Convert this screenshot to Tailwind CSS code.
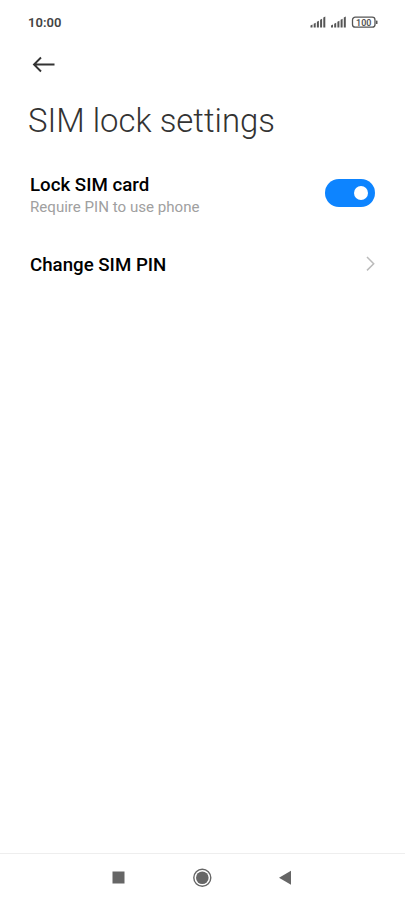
<!DOCTYPE html>
<html lang="en">
<head>
    <meta charset="UTF-8">
    <meta name="viewport" content="width=device-width, initial-scale=1.0">
    <title>SIM lock settings</title>
    <script src="https://cdn.jsdelivr.net/npm/@tailwindcss/browser@4"></script>
</head>
<body class="bg-white font-['Roboto',sans-serif]">
<div class="flex flex-col w-[405px] h-[902px] overflow-hidden">
    <!-- Status bar -->
    <div class="flex items-center justify-between h-11 pl-7 pr-[27px]">
        <span class="pt-px text-[13px] font-semibold tracking-[0.05px] text-[#444]">10:00</span>
        <svg class="w-[68px] h-3" viewBox="0 0 68 12" fill="#555">
            <path d="M0.500 9.500l2-1v3h-2zM3.700 7.800l2-1v4.700h-2zM6.900 5.800l2-1v6.700h-2zM10.100 3.700l2-1v8.800h-2zM13.300 1.500l2-1v11h-2z"/>
            <path d="M21 9.500l2-1v3h-2zM24.200 7.800l2-1v4.700h-2zM27.400 5.800l2-1v6.700h-2zM30.600 3.700l2-1v8.800h-2zM33.800 1.500l2-1v11h-2z"/>
            <rect x="42.500" y="1.200" width="22.500" height="10" rx="2.800" fill="none" stroke="#555" stroke-width="1.300"/>
            <rect x="66" y="4.500" width="1.500" height="3.500" rx="0.500"/>
            <text x="53.800" y="9.600" text-anchor="middle" font-size="9" font-weight="600">100</text>
        </svg>
    </div>

    <!-- Header -->
    <header class="pl-7">
        <button class="flex items-center h-[42px] pl-1">
            <svg class="w-6 h-5" viewBox="0 0 24 20" fill="none" stroke="#333" stroke-width="1.900">
                <path d="M22.500 9.500H2M9 2.500L2 9.500L9 16.500"/>
            </svg>
        </button>
        <h1 class="mt-[13px] text-[32.9px] leading-[44px] font-light text-[#333]">SIM lock settings</h1>
    </header>

    <!-- Settings -->
    <main class="flex-1 px-[30px] pt-[30px]">
        <div class="flex items-start justify-between">
            <div>
                <h2 class="text-[18.7px] leading-6 font-medium text-black">Lock SIM card</h2>
                <p class="text-[15.1px] leading-5 text-[#a0a0a0]">Require PIN to use phone</p>
            </div>
            <div class="flex items-center justify-end w-[50px] h-7 mt-1.5 pr-[7px] rounded-full bg-[#0d84ff]">
                <div class="size-[14px] rounded-full bg-white"></div>
            </div>
        </div>
        <div class="flex items-start justify-between mt-9">
            <h2 class="text-[18.7px] leading-6 font-medium text-black">Change SIM PIN</h2>
            <svg class="w-[10px] h-4 mt-[3px]" viewBox="0 0 10 16" fill="none" stroke="#bbb" stroke-width="1.500">
                <path d="M2 1L8.700 7.700L2 14.400"/>
            </svg>
        </div>
    </main>

    <!-- Navigation bar -->
    <nav class="h-[49px] pl-28 border-t border-[#eee]">
        <svg class="w-[180px] h-12" viewBox="0 0 180 48" fill="#666">
            <rect x="0.500" y="17.500" width="12" height="12"/>
            <circle cx="90.300" cy="23.700" r="6.300"/>
            <circle cx="90.300" cy="23.700" r="8.500" fill="none" stroke="#666" stroke-width="1.400"/>
            <path d="M167 23.700L179 16.700V30.700Z"/>
        </svg>
    </nav>
</div>
</body>
</html>
